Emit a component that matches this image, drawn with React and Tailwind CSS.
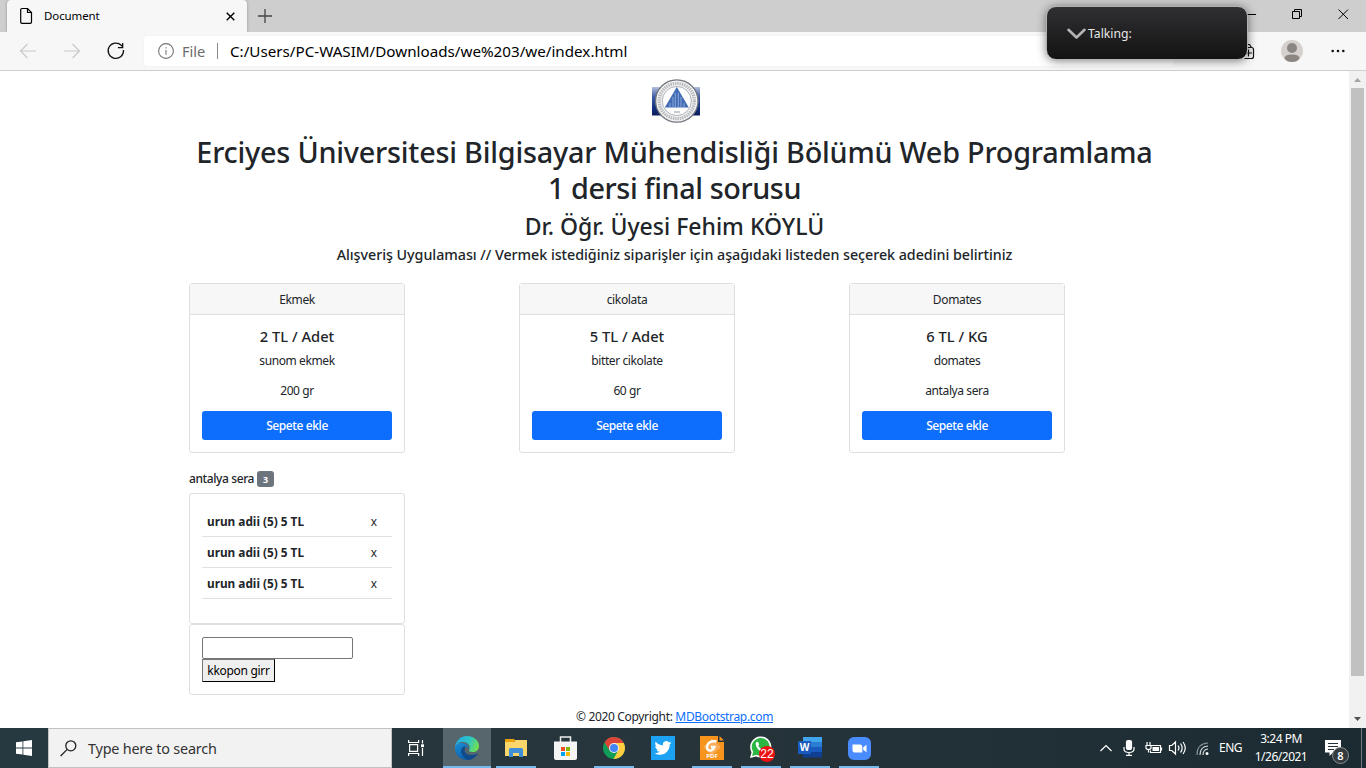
import React from "react";

const stroke = { fill: "none", stroke: "currentColor" };

function TabStrip() {
  return (
    <div className="flex h-8 shrink-0 bg-[#cecece] pl-[7px]">
      <div className="flex h-8 w-[240px] items-center rounded-t-[4px] bg-[#f7f7f7] pr-3 pl-3 shadow-[0_0_3px_rgba(0,0,0,0.3)]">
        <svg className="h-[18px] w-[15px] text-black" viewBox="0 0 15 18" {...stroke} strokeWidth="1.2">
          <path d="M3 1.5h5.5l4 4v9.5q0 1.3-1.3 1.3H3q-1.3 0-1.3-1.3V2.800q0-1.3 1.300-1.300z" />
          <path d="M8.500 1.500v4h4" />
        </svg>
        <span className="ml-[10px] grow text-[11.500px] leading-4 tracking-[-0.1px] text-black">Document</span>
        <svg className="h-[9px] w-[9px] text-black" viewBox="0 0 9 9" {...stroke} strokeWidth="1.4">
          <path d="M.7.7l7.600 7.600M8.300.7L.7 8.300" />
        </svg>
      </div>
      <svg className="mt-[9px] ml-[11px] h-[14px] w-[14px] text-[#444]" viewBox="0 0 14 14" {...stroke} strokeWidth="1.3">
        <path d="M7 0v14M0 7h14" />
      </svg>
      <div className="grow" />
      <svg className="h-8 w-[120px] text-black" viewBox="1246 0 120 32" {...stroke} strokeWidth="1">
        <path d="M1246 14.500h10M1292.500 11.500h7v7h-7zM1294.500 11.500v-2h7v7h-2M1338.500 9.500l9.500 9.500M1348 9.500l-9.500 9.500" />
      </svg>
    </div>
  );
}

function Toolbar() {
  return (
    <div className="flex h-[39px] shrink-0 items-center border-b border-[#cfcfcf] bg-[#f7f7f7]">
      <svg className="h-[38px] w-[144px]" viewBox="0 32 144 38" {...stroke}>
        <path stroke="#cacaca" strokeWidth="1.200" d="M36 51H20.500M27.500 44l-7 7 7 7M64 51h15.500M72.500 44l7 7-7 7" />
        <path stroke="#111" strokeWidth="1.250" d="M123.500 50a7.700 7.700 0 1 1-2.200-4.700l1.700 1.900M122.700 43v4.600h-4.800" />
      </svg>
      <div className="flex h-[30px] w-[1030px] items-center rounded-[3px] bg-white pl-[14px] shadow-[0_0_2px_rgba(0,0,0,0.06)]">
        <svg className="h-4 w-4 text-[#767676]" viewBox="0 0 16 16" {...stroke} strokeWidth="1.100">
          <circle cx="8" cy="8" r="7.400" />
          <path d="M8 7v4.700M8 4.200v1.400" />
        </svg>
        <span className="ml-[8px] w-[35px] text-[14.600px] leading-5 text-[#6c6c6c]">File</span>
        <span className="h-4 w-px bg-[#8a8a8a]" />
        <span className="ml-3 text-[15.200px] leading-5 whitespace-nowrap text-black">C:/Users/PC-WASIM/Downloads/we%203/we/index.html</span>
      </div>
      <div className="grow" />
      <svg className="h-[38px] w-[130px]" viewBox="1236 32 130 38" fill="none">
        <path stroke="#111" strokeWidth="1.200" d="M1243 47.500h8.500q2 0 2 2V56.500q0 2-2 2h-7M1248.500 49.500v7M1245 53h7M1246 44.500h3.500l2 3" />
        <circle cx="1292" cy="51" r="11" fill="#d4d1ce" />
        <circle cx="1292" cy="48" r="5" fill="#8c8682" />
        <path fill="#8c8682" d="M1284.500 58.500q0-4 7.500-4t7.500 4q-2.500 3.500-7.500 3.500t-7.500-3.500z" />
        <g fill="#111">
          <circle cx="1332.700" cy="51" r="1.300" />
          <circle cx="1338" cy="51" r="1.300" />
          <circle cx="1343.300" cy="51" r="1.300" />
        </g>
      </svg>
    </div>
  );
}

function TalkingOverlay() {
  return (
    <div className="absolute top-[6px] left-[1046px] flex h-[54px] w-[202px] items-center rounded-[10px] border border-[#b2b2b4] bg-linear-to-b from-[#303032] to-[#131314] pl-5 shadow-[0_1px_10px_rgba(0,0,0,0.5)]">
      <svg className="mt-[2px] h-3 w-[19px] text-[#b5b5b5]" viewBox="0 0 19 12" {...stroke} strokeWidth="2.600" strokeLinecap="round" strokeLinejoin="round">
        <path d="M1.500 1.800L9.500 9.500l8-7.700" />
      </svg>
      <span className="mt-px ml-[2px] text-[12.200px] leading-4 text-[#e6e6e6]">Talking:</span>
    </div>
  );
}

function SealLogo() {
  return (
    <svg className="h-[45px] w-[48px]" viewBox="0 0 48 45">
      <defs>
        <linearGradient id="band" x1="0" x2="0" y1="0" y2="1">
          <stop offset="0" stopColor="#b4c0dd" />
          <stop offset=".35" stopColor="#3d5ca6" />
          <stop offset=".75" stopColor="#122f7d" />
          <stop offset="1" stopColor="#0d1f5c" />
        </linearGradient>
      </defs>
      <path fill="url(#band)" d="M0 8h48v28.500H0z" />
      <circle cx="24.800" cy="22" r="21.200" fill="#f5f5f5" stroke="#73777e" strokeWidth="1.300" />
      <circle cx="24.800" cy="22" r="17.600" fill="none" stroke="#b9bbbf" strokeWidth="3.400" strokeDasharray="1.500 .8" />
      <circle cx="24.800" cy="22" r="14.600" fill="#fcfcfc" stroke="#9ba0a8" strokeWidth=".8" />
      <path fill="#416cb4" d="M24.800 8l12 20.500h-24z" />
      <path stroke="#9db7e2" strokeWidth=".8" d="M21 18v10M23.300 14v14M26.300 14v14M29 18v10M18 24v4M32 24v4" />
      <path stroke="#999" strokeWidth="1" d="M22 33h6" />
    </svg>
  );
}

const products = [
  { name: "Ekmek", price: "2 TL / Adet", detail: "sunom ekmek", note: "200 gr" },
  { name: "cikolata", price: "5 TL / Adet", detail: "bitter cikolate", note: "60 gr" },
  { name: "Domates", price: "6 TL / KG", detail: "domates", note: "antalya sera" },
];

function ProductCard({ name, price, detail, note }) {
  return (
    <div className="h-[170px] w-[216px] rounded-[3px] border border-[#dfdfdf] text-center text-[#212529]">
      <div className="h-[31px] border-b border-[#dfdfdf] bg-[#f7f7f7] pt-[7px] text-[12px] leading-[18px] tracking-[-0.35px]">{name}</div>
      <div className="px-3 pt-3">
        <div className="text-[14.700px] leading-[18px] font-medium">{price}</div>
        <div className="mt-[7px] text-[12px] leading-[18px] tracking-[-0.4px]">{detail}</div>
        <div className="mt-3 text-[12px] leading-[18px] tracking-[-0.4px]">{note}</div>
        <button className="mt-[11px] block h-[29px] w-full rounded-[3px] bg-[#0d6efd] text-[12px] leading-[18px] font-medium tracking-[-0.4px] text-white">Sepete ekle</button>
      </div>
    </div>
  );
}

function Cart() {
  return (
    <div className="ml-[189px] w-[216px] text-[#212529]">
      <div className="mt-[17px] flex h-[18px] items-center">
        <span className="w-[65px] text-[12px] leading-[18px] font-medium tracking-[-0.4px] whitespace-nowrap">antalya sera</span>
        <span className="ml-[3px] flex h-4 w-[17px] items-center justify-center rounded-[3px] bg-[#6c757d] text-[9px] leading-none font-bold text-white">3</span>
      </div>
      <div className="mt-[5px] h-[131px] rounded-[3px] border border-[#dfdfdf] px-3 pt-3">
        {[0, 1, 2].map((row) => (
          <div key={row} className="flex h-[31px] items-center border-b border-[#dee2e6] pr-[15px] pl-[5px] text-[11.800px] leading-[18px]">
            <span className="grow font-bold">urun adii (5) 5 TL</span>
            <span>x</span>
          </div>
        ))}
      </div>
      <div className="h-[71px] rounded-[3px] border border-[#dfdfdf] px-3 pt-3">
        <input className="block h-[22px] w-[151px] rounded-[2px] border border-[#767676] bg-white" />
        <button className="block h-[23px] w-[73px] border border-t-[#767676] border-r-black border-b-black border-l-[#767676] bg-[#efefef] text-[12px] leading-[18px] tracking-[-0.3px] whitespace-nowrap text-black">kkopon girr</button>
      </div>
    </div>
  );
}

function Page() {
  return (
    <div className="flex min-h-0 grow bg-white">
      <main className="flex w-[1349px] flex-col text-[#212529]">
        <div className="flex h-[63px] justify-center pt-2 pl-[2px]"><SealLogo /></div>
        <h1 className="text-center text-[28.800px] leading-[36px] font-medium tracking-[-0.22px] whitespace-nowrap">
          Erciyes Üniversitesi Bilgisayar Mühendisliği Bölümü Web Programlama
          <br /><span className="tracking-[-0.42px]">1 dersi final sorusu</span>
        </h1>
        <h2 className="mt-[6px] text-center text-[23px] leading-[29px] font-medium">Dr. Öğr. Üyesi Fehim KÖYLÜ</h2>
        <h3 className="mt-[5px] text-center text-[14.300px] leading-[18px] font-medium tracking-[-0.04px]">
          Alışveriş Uygulaması // Vermek istediğiniz siparişler için aşağıdaki listeden seçerek adedini belirtiniz
        </h3>
        <div className="mt-[19px] ml-[189px] flex gap-[114px]">
          {products.map((p) => <ProductCard key={p.name} {...p} />)}
        </div>
        <Cart />
        <footer className="mt-[13px] text-center text-[12px] leading-[18px] tracking-[-0.33px]">
          © 2020 Copyright: <a className="text-[#0d6efd] underline">MDBootstrap.com</a>
        </footer>
      </main>
      <div className="flex w-[17px] flex-col items-center bg-[#f1f1f1]">
        <svg className="h-[17px] w-[17px]" viewBox="0 0 17 17"><path fill="#a3a3a3" d="M5 11h7L8.500 7z" /></svg>
        <div className="h-[588px] w-[13px] bg-[#c1c1c1]" />
        <div className="grow" />
        <svg className="h-[17px] w-[17px]" viewBox="0 0 17 17"><path fill="#505050" d="M5 6h7l-3.500 4z" /></svg>
      </div>
    </div>
  );
}

function EdgeIcon() {
  return (
    <svg className="size-6" viewBox="0 0 24 24">
      <defs>
        <linearGradient id="edgeTop" x1="0" x2="1" y1=".2" y2=".5"><stop stopColor="#27a9e1" /><stop offset=".55" stopColor="#2cc3c9" /><stop offset="1" stopColor="#6fe052" /></linearGradient>
        <linearGradient id="edgeSide" x1="0" x2=".6" y1="0" y2="1"><stop stopColor="#1b8fd9" /><stop offset="1" stopColor="#0c59a4" /></linearGradient>
      </defs>
      <path fill="url(#edgeSide)" d="M0 12C0 8 5 6 9 7.500c3 1 5 3 4.500 5-.6-.7-1-1.500-2.500-1.500-2 0-3 2-2.500 4 .8 4 6.500 6 13.500 3-2 3.500-5.500 6-10 6C5 24 0 18.600 0 12z" />
      <path fill="#114a8b" d="M10.500 10.500C7 10 5.600 14 6.500 17c1 3.500 4 6 7 7 4-.4 7-2.800 8.800-5.800.3-.6-.2-.8-.7-.5-6 3-12.500.3-12-4 .1-1.400.5-2.400.9-3.200z" />
      <path fill="url(#edgeTop)" d="M0 11.500C.8 4.500 5.500 0 12 0c7 0 12 4.500 12 10 0 4-3 6-6 6-2.500 0-4.500-.8-4-1.800 2-3.200-.2-8.200-6.500-8.200-4 0-6.500 2.500-7.500 5.500z" />
    </svg>
  );
}

function FolderIcon() {
  return (
    <svg className="h-5 w-[22px]" viewBox="0 0 22 20">
      <path fill="#e8a30d" d="M0 1h9l2 2h-2v3H0z" />
      <path fill="#fbd66b" d="M0 4h9l1.500-2H22v16H0z" />
      <path fill="#3e8fd8" d="M4 11.500q0-1.500 1.500-1.500h11q1.500 0 1.500 1.500V19h-4v-4H8v4H4z" />
      <path fill="#fbd66b" d="M8 15h6v3H8z" />
    </svg>
  );
}

function StoreIcon() {
  return (
    <svg className="h-6 w-[23px]" viewBox="0 0 23 24">
      <path fill="none" stroke="#eee" strokeWidth="1.500" d="M6.500 6V1h10v5" />
      <path fill="#f5f5f5" d="M0 5.500h23V22q0 2-2 2H2q-2 0-2-2z" />
      <path fill="#f25022" d="M7 11h4v4H7z" /><path fill="#7fba00" d="M12 11h4v4h-4z" />
      <path fill="#00a4ef" d="M7 16h4v4H7z" /><path fill="#ffb900" d="M12 16h4v4h-4z" />
    </svg>
  );
}

function ChromeIcon() {
  return (
    <svg className="size-[22px]" viewBox="0 0 22 22">
      <circle cx="11" cy="11" r="11" fill="#0f9d58" />
      <path fill="#ffcd40" d="M11 6h9.800A11 11 0 0 1 10.500 22l4.800-8.500z" />
      <path fill="#db4437" d="M1.500 5.500L6.700 13.500 11 11V6h9.800A11 11 0 0 0 1.500 5.500z" />
      <circle cx="11" cy="11" r="5" fill="#f1f1f1" /><circle cx="11" cy="11" r="4" fill="#4285f4" />
    </svg>
  );
}

function TwitterIcon() {
  return (
    <svg className="size-6" viewBox="0 0 24 24">
      <path fill="#1da1f2" d="M0 0h24v24H0z" />
      <path fill="#fff" transform="translate(3.600 3.600) scale(.7)" d="M23.950 4.570a10 10 0 0 1-2.820.77 4.960 4.960 0 0 0 2.160-2.720c-.95.550-2 .95-3.130 1.180a4.920 4.920 0 0 0-8.380 4.480C7.690 8.090 4.070 6.130 1.640 3.160a4.930 4.930 0 0 0 1.520 6.570 4.900 4.900 0 0 1-2.230-.61v.06a4.920 4.920 0 0 0 3.950 4.830 5 5 0 0 1-2.210.08 4.940 4.940 0 0 0 4.600 3.420A9.870 9.870 0 0 1 0 19.540a14 14 0 0 0 7.550 2.210c9.050 0 14-7.500 14-13.980l-.02-.64a9.930 9.930 0 0 0 2.420-2.560z" />
    </svg>
  );
}

function PdfIcon() {
  return (
    <div className="relative size-6">
      <svg className="size-6" viewBox="0 0 24 24">
        <path fill="#f7941e" d="M0 0h18v6h6v18H0zM19.500 0L24 4.500h-4.500z" />
        <path fill="#f9ad58" d="M12 3l9 8-9 8-9-8z" />
        <path fill="none" stroke="#fff" strokeWidth="2.300" d="M16.500 5.500c-5-1-9 1-9.500 5-.3 3 1.500 4.500 4 4 2-.4 3-2 3.500-3.500h-3.500" />
      </svg>
      <span className="absolute bottom-[1px] left-0 w-6 text-center text-[6px] leading-[6px] font-bold text-white">PDF</span>
    </div>
  );
}

function WhatsAppIcon() {
  return (
    <div className="relative h-6 w-6">
      <svg className="size-[23px]" viewBox="0 0 23 23">
        <path fill="#fff" d="M1 22l1.500-5.800A10.600 10.600 0 1 1 7 20.500z" />
        <path fill="#2cb742" d="M3 20l1.200-4.200A8.900 8.900 0 1 1 7.500 18.800z" />
        <path fill="#fff" d="M7 6.500q1-1.500 2.200-.3l1 2.200-1 1.400q1.300 2.500 3.800 3.500l1.300-1.300 2.400 1.200q.4 1.500-1.200 2.500-2.500 1-6-2Q6 10 7 6.500z" />
      </svg>
      <span className="absolute top-[10px] left-[10px] flex size-4 items-center justify-center rounded-full bg-[#ed1111] font-['Liberation_Sans',sans-serif] text-[12px] leading-none text-white">22</span>
    </div>
  );
}

function WordIcon() {
  return (
    <div className="relative h-6 w-6">
      <svg className="h-[22px] w-6" viewBox="0 0 24 22">
        <path fill="#41a5ee" d="M5 1h19v5.500H5z" /><path fill="#2b7cd3" d="M5 6h19v5.500H5z" />
        <path fill="#185abd" d="M5 11h19v5.500H5z" /><path fill="#103f91" d="M5 16h19v5.500H5z" />
        <path fill="#185abd" d="M0 5h13v13H0z" />
      </svg>
      <span className="absolute top-[5px] left-0 w-[13px] text-center text-[10px] leading-[13px] font-bold text-white">W</span>
    </div>
  );
}

function ZoomIcon() {
  return (
    <svg className="size-[23px]" viewBox="0 0 23 23">
      <rect width="23" height="23" rx="6" fill="#4a8cff" />
      <path fill="#fff" d="M4.500 7.500H12q2.300 0 2.300 2.300v5.700H6.800q-2.300 0-2.300-2.300zM15.200 10.200l3.300-2.500v7.600l-3.300-2.500z" />
    </svg>
  );
}

const apps = [
  { id: "edge", Icon: EdgeIcon, running: false, active: true },
  { id: "files", Icon: FolderIcon, running: true },
  { id: "store", Icon: StoreIcon, running: false },
  { id: "chrome", Icon: ChromeIcon, running: true },
  { id: "twitter", Icon: TwitterIcon, running: false },
  { id: "pdf", Icon: PdfIcon, running: true },
  { id: "whatsapp", Icon: WhatsAppIcon, running: true },
  { id: "word", Icon: WordIcon, running: true },
  { id: "zoom", Icon: ZoomIcon, running: true },
];

function Taskbar() {
  return (
    <div className="flex h-10 shrink-0 bg-linear-to-r from-[#263840] via-[#27353b] to-[#1b2b31] text-white">
      <div className="flex w-12 items-center justify-center">
        <svg className="size-4" viewBox="0 0 16 16" fill="#fff"><path d="M0 2.300l6.500-.9v6.100H0zM7.300 1.200L16 0v7.500H7.300zM0 8.400h6.500v6.200L0 13.700zM7.300 8.400H16V16l-8.700-1.200z" /></svg>
      </div>
      <div className="flex w-[344px] items-center border border-[#c3c3c3] bg-[#f2f2f2] pl-[11px]">
        <svg className="size-[17px] text-[#222]" viewBox="0 0 17 17" {...stroke} strokeWidth="1.300"><circle cx="10.800" cy="5.800" r="5" /><path d="M7.200 9.400L.6 16" /></svg>
        <span className="mt-px ml-[11px] text-[14.400px] leading-5 tracking-[-0.2px] text-[#333]">Type here to search</span>
      </div>
      <div className="flex w-[51px] items-center pl-4">
        <svg className="size-4" viewBox="0 0 16 16" {...stroke} strokeWidth="1.200"><path d="M.6 0v2.500h10V0M.6 16v-2.500h10V16M1.600 4.600h8v6.800h-8zM14.500 0v3.500M14.500 8v8" /><path fill="#fff" stroke="none" d="M13 4.300h3v2.800h-3z" /></svg>
      </div>
      {apps.map(({ id, Icon, running, active }) => (
        <div key={id} className="flex w-[49px] flex-col items-center">
          <div className={active ? "flex h-[38px] w-12 items-center justify-center self-start bg-[#56666c] pt-[2px]" : "flex h-[38px] w-12 items-center justify-center self-start pt-[2px]"}>
            <Icon />
          </div>
          <div className={active ? "h-[2px] w-12 self-start bg-[#76b9ed]" : running ? "mr-px h-[2px] w-10 bg-[#76b9ed]" : "h-[2px]"} />
        </div>
      ))}
      <div className="grow" />
      <svg className="h-10 w-[118px]" viewBox="1096 728 118 40" {...stroke} strokeWidth="1.200">
        <path d="M1100.500 751l5.500-5.500 5.500 5.500" />
        <rect x="1126.500" y="740.500" width="5" height="9" rx="1.500" fill="#fff" />
        <path d="M1124 747v2q0 3.500 5 3.500t5-3.500v-2M1129 752.500v3M1126 755.300h6" />
        <path d="M1151 745.500h9.500v7h-10v-2M1161.500 747.500v3" /><path fill="#fff" stroke="none" d="M1152.500 747h6.500v4h-6.500z" />
        <path d="M1146 745.500h5v2q0 2-2.500 2t-2.500-2zM1147 742v3.500M1150 742v3.500M1148.500 749.500v3" />
        <path d="M1169.500 745.500h2.300l3.700-3.500v12l-3.700-3.500h-2.300zM1178 745.500q2 2.500 0 5M1180.500 743.500q3.300 4.500 0 9M1183 742q4.500 6 0 12" />
        <g stroke="#859196"><path d="M1197 755q0-11.500 11-12" /><path stroke="#d5dadc" d="M1200 755q0-8.500 8-9M1203 755q0-5.500 5-6" /></g>
        <circle cx="1207" cy="753.500" r="1.500" fill="#fff" stroke="none" />
      </svg>
      <span className="flex w-[32px] items-center pl-[5px] text-[12px] leading-none tracking-[-0.5px]">ENG</span>
      <div className="ml-[2px] flex w-[66px] flex-col items-center pt-[2px] text-[12px] leading-[18px] tracking-[-0.5px] whitespace-nowrap">
        <span>3:24 PM</span>
        <span>1/26/2021</span>
      </div>
      <div className="relative ml-[11px] h-10 w-[37px] border-r border-[#6e797d]">
        <svg className="absolute top-3 left-0 h-4 w-4" viewBox="0 0 16 16"><path fill="#fff" d="M0 0h16v12.500H8L4.500 16v-3.500H0z" /><path stroke="#243238" d="M3 3.500h10M3 6.500h10M3 9.500h6" /></svg>
        <span className="absolute top-[19px] left-[7px] flex size-[17px] items-center justify-center rounded-full border border-[#8a8f91] bg-[#343b3e] text-[11px] leading-none font-semibold">8</span>
      </div>
      <div className="w-1" />
    </div>
  );
}

export default function App() {
  return (
    <div className="relative flex h-[768px] w-[1366px] flex-col overflow-hidden font-['Noto_Sans',sans-serif]">
      <TabStrip />
      <Toolbar />
      <Page />
      <Taskbar />
      <TalkingOverlay />
    </div>
  );
}
